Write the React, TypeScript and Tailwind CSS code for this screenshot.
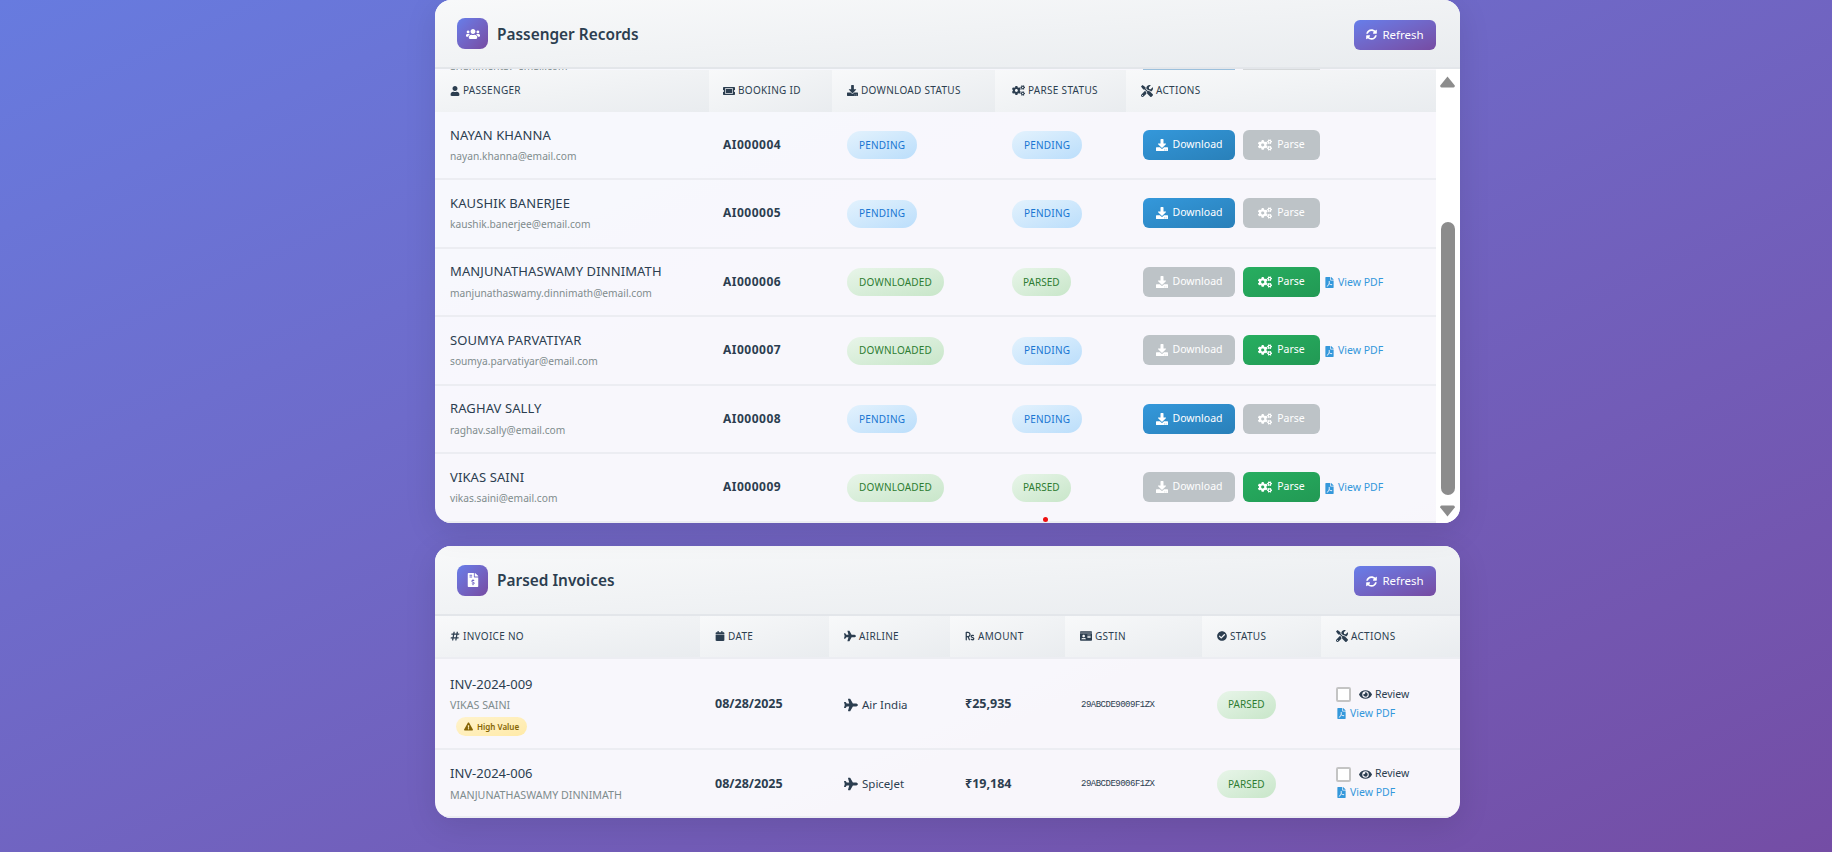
import React from 'react';
import {
  FaUsers, FaUser, FaTicketAlt, FaDownload, FaCogs, FaTools, FaSyncAlt, FaFileInvoiceDollar,
  FaFilePdf, FaHashtag, FaCalendar, FaPlane, FaIdCard, FaCheckCircle, FaEye,
  FaExclamationTriangle,
} from 'react-icons/fa';
import { FaRupeeSign } from 'react-icons/fa6';

type Status = 'pending' | 'downloaded' | 'parsed';

interface Passenger {
  name: string;
  email: string;
  booking: string;
  download: Status;
  parse: Status;
}

const passengers: Passenger[] = [
  { name: 'NAYAN KHANNA', email: 'nayan.khanna@email.com', booking: 'AI000004', download: 'pending', parse: 'pending' },
  { name: 'KAUSHIK BANERJEE', email: 'kaushik.banerjee@email.com', booking: 'AI000005', download: 'pending', parse: 'pending' },
  { name: 'MANJUNATHASWAMY DINNIMATH', email: 'manjunathaswamy.dinnimath@email.com', booking: 'AI000006', download: 'downloaded', parse: 'parsed' },
  { name: 'SOUMYA PARVATIYAR', email: 'soumya.parvatiyar@email.com', booking: 'AI000007', download: 'downloaded', parse: 'pending' },
  { name: 'RAGHAV SALLY', email: 'raghav.sally@email.com', booking: 'AI000008', download: 'pending', parse: 'pending' },
  { name: 'VIKAS SAINI', email: 'vikas.saini@email.com', booking: 'AI000009', download: 'downloaded', parse: 'parsed' },
];

const invoices = [
  { no: 'INV-2024-009', name: 'VIKAS SAINI', highValue: true, date: '08/28/2025', airline: 'Air India', amount: '₹25,935', gstin: '29ABCDE9009F1ZX' },
  { no: 'INV-2024-006', name: 'MANJUNATHASWAMY DINNIMATH', highValue: false, date: '08/28/2025', airline: 'SpiceJet', amount: '₹19,184', gstin: '29ABCDE9006F1ZX' },
];

const StatusPill = ({ status }: { status: Status }) => (
  <span
    className={`inline-flex h-[28px] items-center rounded-[20px] px-[12px] text-[10px] uppercase tracking-[0.2px] ${
      status === 'pending'
        ? 'bg-gradient-to-br from-[#e3f2fd] to-[#bbdefb] text-[#1976d2]'
        : 'bg-gradient-to-br from-[#e8f5e9] to-[#c8e6c9] text-[#2e7d32]'
    } ${status === 'parsed' ? 'tracking-[0px] !px-[11px]' : ''}`}
  >
    {status}
  </span>
);

const CardHeader = ({ title, icon, height }: { title: string; icon: React.ReactNode; height: string }) => (
  <div className={`flex items-center justify-between border-b-2 border-[#e3e6ea] bg-gradient-to-br from-[#f8f9fa] to-[#e9ecef] pl-[22px] pr-[24px] ${height}`}>
    <div className="flex items-center gap-[9px]">
      <div className="flex h-[31px] w-[31px] items-center justify-center rounded-[8px] bg-gradient-to-br from-[#667eea] to-[#764ba2] text-[14px] text-white">
        {icon}
      </div>
      <h2 className="mt-[2px] text-[15.4px] font-semibold text-[#2c3e50]">{title}</h2>
    </div>
    <button className="mt-[2px] flex h-[30px] w-[82px] items-center justify-center gap-[5px] rounded-[6px] bg-gradient-to-br from-[#667eea] to-[#764ba2] text-[11.5px] text-white">
      <FaSyncAlt className="text-[11px]" />
      Refresh
    </button>
  </div>
);

const Th = ({ icon, label, width, pad }: { icon: React.ReactNode; label: string; width?: string; pad?: string }) => (
  <th className={`h-[42px] bg-gradient-to-br from-[#f8f9fa] to-[#e9ecef] text-left text-[10px] font-normal uppercase tracking-[0.3px] text-[#2c3e50] ${pad ?? 'px-[15px]'} ${width ?? ''}`}>
    <span className="-mt-[1px] flex items-center gap-[3px]">
      {icon}
      {label}
    </span>
  </th>
);

const ScrollArrow = ({ down }: { down?: boolean }) => (
  <svg viewBox="0 0 15 12" className={`h-[12px] w-[15px] ${down ? 'rotate-180' : ''}`} fill="#8c8c8c">
    <path d="M7.5 0.5 L14.8 9.5 Q15 11.5 13.5 11.5 L1.5 11.5 Q0 11.5 0.2 9.5 Z" />
  </svg>
);

const ActionButton = ({ active, kind }: { active: boolean; kind: 'download' | 'parse' }) => {
  const isDownload = kind === 'download';
  const colors = !active
    ? 'bg-[#bdc3c7]'
    : isDownload
      ? 'bg-gradient-to-br from-[#3498db] to-[#2980b9]'
      : 'bg-gradient-to-br from-[#27ae60] to-[#229954]';
  return (
    <button className={`flex h-[30px] items-center justify-center gap-[5px] rounded-[6px] text-[10.5px] text-white ${isDownload ? 'w-[92px]' : 'w-[77px]'} ${colors}`}>
      {isDownload ? <FaDownload className="text-[12px]" /> : <FaCogs className="text-[14px]" />}
      {isDownload ? 'Download' : 'Parse'}
    </button>
  );
};

const PdfLink = ({ className }: { className?: string }) => (
  <a className={`flex items-center gap-[3px] text-[10.5px] text-[#3498db] ${className ?? ''}`}>
    <FaFilePdf className="text-[11px]" />
    View PDF
  </a>
);

export default function App() {
  return (
    <div className="h-[852px] overflow-hidden bg-gradient-to-br from-[#677bdf] to-[#744da5] font-['Noto_Sans',sans-serif]">
      <div className="ml-[435px] flex w-[1025px] flex-col gap-[23px]">
        {/* Passenger table */}
        <section className="relative h-[523px] overflow-hidden rounded-[16px] bg-white/95 shadow-[0_8px_32px_rgba(0,0,0,0.1)]">
          <CardHeader title="Passenger Records" icon={<FaUsers />} height="h-[69px]" />
          <div className="flex h-[454px]">
            <div className="w-[1001px] overflow-hidden">
              {/* bottom edge of the row scrolled away under the sticky header */}
              <div className="flex h-[1px] overflow-hidden">
                <div className="-mt-[10px] w-[708px] pl-[15px] text-[10.2px] leading-[14px] text-[#7f8c8d]">arjun.mehta@email.com</div>
                <div className="h-[1px] w-[92px] bg-[#9cc0dc]" />
                <div className="ml-[8px] h-[1px] w-[77px] bg-[#d5d8da]" />
              </div>
              <table className="w-full table-fixed border-collapse">
                <thead>
                  <tr>
                    <Th width="w-[274px]" icon={<FaUser className="text-[10px]" />} label="Passenger" />
                    <Th width="w-[123px]" pad="px-[14px]" icon={<FaTicketAlt className="text-[12px]" />} label="Booking ID" />
                    <Th width="w-[163px]" icon={<FaDownload className="text-[11px]" />} label="Download Status" />
                    <Th width="w-[131px]" pad="px-[17px]" icon={<FaCogs className="text-[13px]" />} label="Parse Status" />
                    <Th pad="px-[15px]" icon={<FaTools className="text-[12px]" />} label="Actions" />
                  </tr>
                </thead>
                <tbody>
                  {passengers.map((p, i) => (
                    <tr key={p.booking} className={`border-b-2 border-[#ecedf2] ${i === 0 ? 'h-[67px]' : 'h-[68.5px]'}`}>
                      <td className="px-[15px]">
                        <div className="text-[13px] tracking-[0.1px] text-[#2c3e50]">{p.name}</div>
                        <div className="mt-[4px] text-[10.2px] text-[#7f8c8d]">{p.email}</div>
                      </td>
                      <td className="px-[14px] text-[12px] font-bold tracking-[0.5px] text-[#2c3e50]">{p.booking}</td>
                      <td className="px-[15px]"><StatusPill status={p.download} /></td>
                      <td className="px-[17px]"><StatusPill status={p.parse} /></td>
                      <td className="px-[17px]">
                        <div className="flex items-center gap-[8px]">
                          <ActionButton kind="download" active={p.download === 'pending'} />
                          <ActionButton kind="parse" active={p.download === 'downloaded'} />
                          {p.download === 'downloaded' && <PdfLink className="-ml-[4px] mt-[2px]" />}
                        </div>
                      </td>
                    </tr>
                  ))}
                </tbody>
              </table>
            </div>
            <div className="flex w-[24px] flex-col items-center bg-white pb-[6px] pr-[1px] pt-[7px]">
              <ScrollArrow />
              <div className="mt-[134px] h-[273px] w-[14px] rounded-[7px] bg-[#8c8c8c]" />
              <div className="mt-auto"><ScrollArrow down /></div>
            </div>
          </div>
          <span className="absolute left-[608px] top-[517px] h-[5px] w-[5px] rounded-full bg-[#ee1111]" />
        </section>

        {/* Parsed invoices */}
        <section className="h-[272px] overflow-hidden rounded-[16px] bg-white/95 shadow-[0_8px_32px_rgba(0,0,0,0.1)]">
          <CardHeader title="Parsed Invoices" icon={<FaFileInvoiceDollar />} height="h-[70px]" />
          <table className="w-full table-fixed border-collapse">
            <thead>
              <tr className="border-b-2 border-[#ecedf2]">
                <Th width="w-[265px]" icon={<FaHashtag className="text-[10px]" />} label="Invoice No" />
                <Th width="w-[129px]" icon={<FaCalendar className="text-[10px]" />} label="Date" />
                <Th width="w-[121px]" icon={<FaPlane className="text-[12px]" />} label="Airline" />
                <Th width="w-[115px]" icon={<FaRupeeSign className="text-[10px]" />} label="Amount" />
                <Th width="w-[137px]" icon={<FaIdCard className="text-[12px]" />} label="GSTIN" />
                <Th width="w-[119px]" icon={<FaCheckCircle className="text-[10px]" />} label="Status" />
                <Th icon={<FaTools className="text-[12px]" />} label="Actions" />
              </tr>
            </thead>
            <tbody>
              {invoices.map((inv) => (
                <tr key={inv.no} className={`border-b-2 border-[#ecedf2] ${inv.highValue ? 'h-[91px]' : 'h-[68px]'}`}>
                  <td className={`px-[15px] ${inv.highValue ? 'pt-[5px]' : 'pt-[1px]'}`}>
                    <div className="text-[13px] text-[#2c3e50]">{inv.no}</div>
                    <div className="mt-[3px] text-[10.7px] text-[#7f8c8d]">{inv.name}</div>
                    {inv.highValue && (
                      <span className="-mt-[1px] ml-[6px] inline-flex h-[19px] items-center gap-[4px] rounded-[10px] bg-gradient-to-br from-[#fff3cd] to-[#ffeaa7] px-[8px] text-[8px] font-semibold text-[#856404]">
                        <FaExclamationTriangle className="text-[9px]" />
                        High Value
                      </span>
                    )}
                  </td>
                  <td className="px-[15px] pt-[2px] text-[12.5px] font-bold text-[#2c3e50]">{inv.date}</td>
                  <td className="px-[15px] pt-[2px] text-[11.5px] text-[#2c3e50]">
                    <span className="flex items-center gap-[4px]">
                      <FaPlane className="text-[14px]" />
                      {inv.airline}
                    </span>
                  </td>
                  <td className="px-[15px] pt-[2px] text-[12.5px] font-bold text-[#2c3e50]">{inv.amount}</td>
                  <td className="px-[16px] pt-[4px] font-['Liberation_Mono',monospace] text-[9px] tracking-[-0.5px] text-[#2c3e50]">{inv.gstin}</td>
                  <td className="px-[15px] pt-[2px]"><StatusPill status="parsed" /></td>
                  <td className="px-[15px] pt-[1px]">
                    <div className="flex items-center gap-[8px]">
                      <input type="checkbox" readOnly className="h-[15px] w-[15px] appearance-none rounded-[2px] border-2 border-[#c4c4c4] bg-white" />
                      <span className="flex items-center gap-[3px] text-[10.5px] text-[#2c3e50]">
                        <FaEye className="text-[13px]" />
                        Review
                      </span>
                    </div>
                    <PdfLink className="mt-[3px]" />
                  </td>
                </tr>
              ))}
            </tbody>
          </table>
        </section>
      </div>
    </div>
  );
}
